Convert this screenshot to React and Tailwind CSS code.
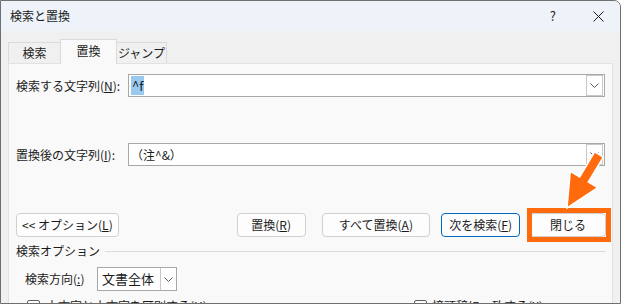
import React from 'react';

const font = { fontFamily: '"Noto Sans CJK JP", "Noto Sans", sans-serif' };

function Chevron() {
    return (
        <svg width="9" height="5" viewBox="0 0 9 5">
            <path d="M0.5 0.5 L4.5 4.5 L8.5 0.5" fill="none" stroke="#5c5c5c" strokeWidth="1" />
        </svg>
    );
}

function Combo({ children }) {
    return (
        <div className="flex h-[23px] w-[477px] items-center border border-[#a8a8a8] bg-white">
            <div className="flex flex-1 items-center pl-[2px]">{children}</div>
            <div className="mr-[1px] flex h-[21px] w-[17px] items-center justify-center border border-[#c8c8c8] bg-white">
                <Chevron />
            </div>
        </div>
    );
}

function Btn({ w, ml, blue, children }) {
    return (
        <div
            className={
                'flex h-[24px] items-center justify-center rounded-[4px] border bg-[#fdfdfd] text-[12px] text-[#1b1b1b] ' +
                (blue ? 'border-[#0067c0]' : 'border-[#d0d0d0]')
            }
            style={{ width: w, marginLeft: ml }}
        >
            {children}
        </div>
    );
}

export default function App() {
    return (
        <div className="relative h-[305px] w-[622px] overflow-hidden bg-white" style={font}>
            <div className="flex h-[304px] w-[621px] flex-col overflow-hidden rounded-tr-[7px] border border-[#6f6f6f] bg-[#f0f0f0] text-[#1b1b1b]">
                {/* title bar */}
                <div className="flex h-[30px] shrink-0 items-center bg-[#eef3fa] pl-[9px] text-[12px]">
                    <span>検索と置換</span>
                    <span className="ml-auto text-[13px]">?</span>
                    <svg className="ml-[37px] mr-[16px]" width="11" height="11" viewBox="0 0 11 11">
                        <path d="M0.5 0.5 L10.5 10.5 M10.5 0.5 L0.5 10.5" stroke="#1b1b1b" strokeWidth="1" />
                    </svg>
                </div>

                {/* tabs */}
                <div className="flex h-[32px] shrink-0 items-end pl-[7px] text-[12px]">
                    <div className="flex h-[21px] w-[52px] items-center justify-center border-l border-t border-[#dadada] bg-[#f0f0f0]">検索</div>
                    <div className="relative z-10 -mb-px flex h-[25px] w-[57px] items-center justify-center border-x border-t border-[#dadada] bg-[#f9f9f9] pb-[2px]">置換</div>
                    <div className="flex h-[21px] w-[50px] items-center justify-center border-r border-t border-[#dadada] bg-[#f0f0f0]">ジャンプ</div>
                </div>

                {/* panel */}
                <div className="ml-[7px] mr-[7px] flex flex-1 flex-col border border-[#e2e2e2] bg-[#f9f9f9] pl-[7px] pr-[6px] text-[12px]">
                    <div className="mt-[10px] flex items-center">
                        <div className="w-[112px]">
                            検索する文字列(<span className="underline">N</span>):
                        </div>
                        <Combo>
                            <span className="flex h-[19px] items-center bg-[#99c9ef] px-[1px] text-[13px]">^f</span>
                        </Combo>
                    </div>

                    <div className="mt-[46px] flex items-center">
                        <div className="w-[112px]">
                            置換後の文字列(<span className="underline">I</span>):
                        </div>
                        <Combo>
                            <span>（注^&amp;）</span>
                        </Combo>
                    </div>

                    <div className="mt-[47px] flex items-center">
                        <Btn w={103} ml={0}>
                            &lt;&lt; オプション(<span className="underline">L</span>)
                        </Btn>
                        <Btn w={69} ml={118}>
                            置換(<span className="underline">R</span>)
                        </Btn>
                        <Btn w={109} ml={16}>
                            すべて置換(<span className="underline">A</span>)
                        </Btn>
                        <Btn w={79} ml={11} blue>
                            次を検索(<span className="underline">F</span>)
                        </Btn>
                        <div className="relative ml-[10px]">
                            <Btn w={76} ml={0}>
                                閉じる
                            </Btn>
                            <div className="absolute -bottom-[5px] -left-[3px] -right-[5px] -top-[5px] border-[5px] border-[#ff6a0d]" />
                        </div>
                    </div>

                    <div className="mt-[6px] flex h-[16px] items-center">
                        <span>検索オプション</span>
                        <div className="ml-[5px] h-px flex-1 bg-[#dcdcdc]" />
                    </div>

                    <div className="mt-[8px] flex items-center pl-[9px]">
                        <span className="w-[72px]">
                            検索方向(<span className="underline">:</span>)
                        </span>
                        <div className="flex h-[24px] w-[80px] items-center border border-[#a8a8a8] bg-white">
                            <span className="flex-1 pl-[4px] text-[13px]">文書全体</span>
                            <div className="flex h-full w-[16px] items-center justify-center border-l border-[#c8c8c8]">
                                <Chevron />
                            </div>
                        </div>
                    </div>

                    <div className="mt-[6px] flex items-center">
                        <div className="ml-[11px] h-[13px] w-[13px] rounded-[2px] border border-[#5f5f5f] bg-white" />
                        <span className="ml-[6px]">大文字と小文字を区別する(<span className="underline">H</span>)</span>
                        <div className="ml-[207px] h-[13px] w-[13px] rounded-[2px] border border-[#5f5f5f] bg-white" />
                        <span className="ml-[5px]">接頭辞に一致する(<span className="underline">X</span>)</span>
                    </div>
                </div>
            </div>

            {/* annotation arrow */}
            <svg className="pointer-events-none absolute left-0 top-0" width="622" height="305" viewBox="0 0 622 305">
                <polygon
                    points="594.7,151.9 603.3,157.1 588.3,182.1 597.7,187.7 567,208 570.3,171.3 579.7,176.9"
                    fill="#ff6a0d"
                    stroke="#ffffff"
                    strokeWidth="1.5"
                    strokeLinejoin="miter"
                />
            </svg>
        </div>
    );
}
